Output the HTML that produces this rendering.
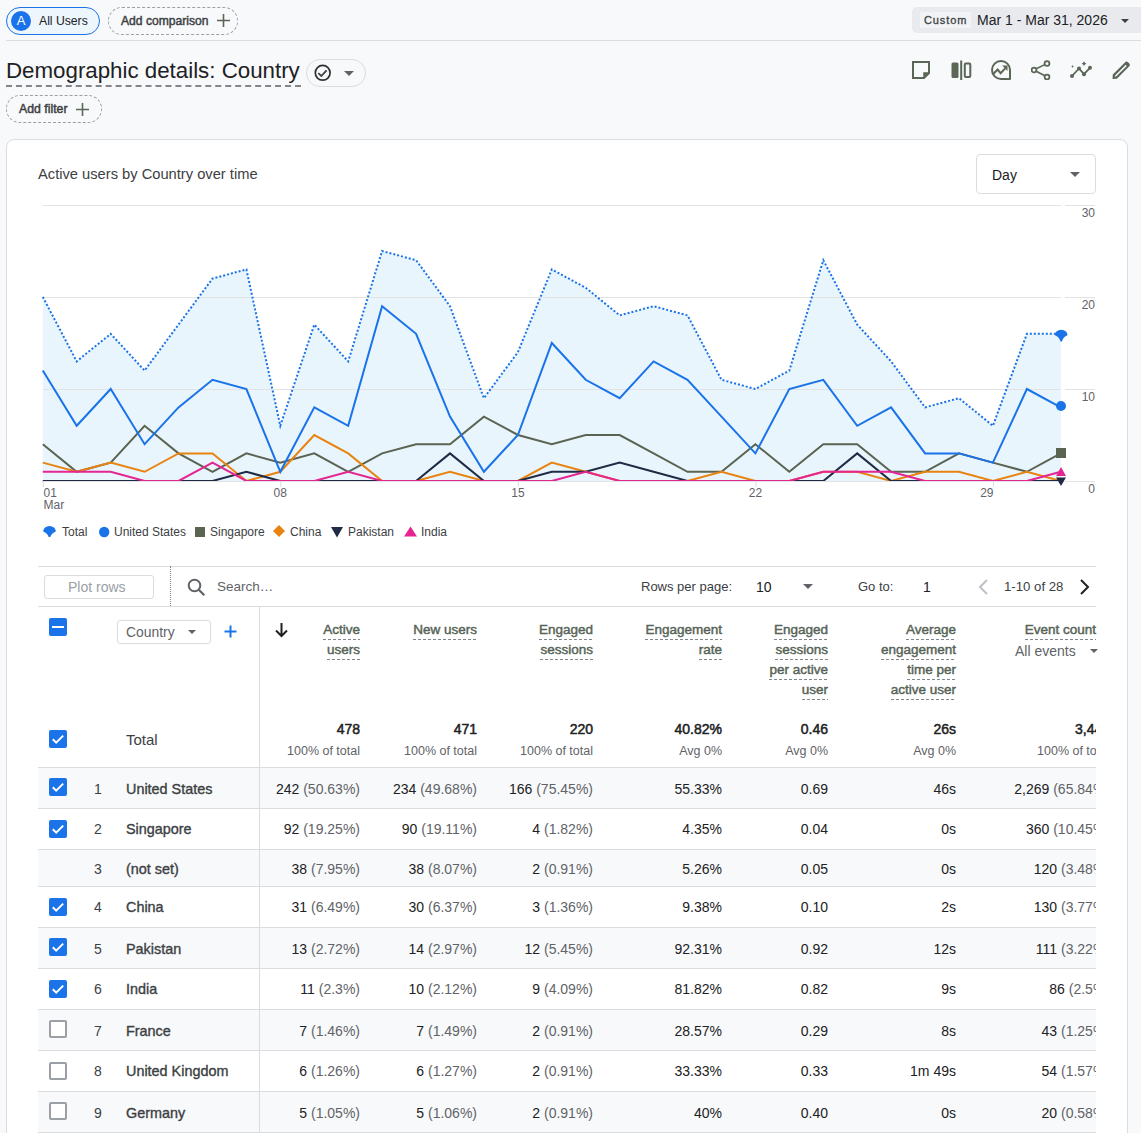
<!DOCTYPE html><html><head><meta charset="utf-8"><style>
*{box-sizing:border-box;margin:0;padding:0}
html,body{width:1141px;height:1133px;overflow:hidden;background:#f8f9fa;font-family:"Liberation Sans",sans-serif;color:#202124}
.a{position:absolute;white-space:nowrap}
.chip{position:absolute;border-radius:14px;height:28px}
.card{position:absolute;left:6px;top:139px;width:1122px;height:1100px;background:#fff;border:1px solid #dadce0;border-radius:8px}
.hl{position:absolute;height:1px;background:#dadce0}
.vl{position:absolute;width:1px;background:#dadce0}
.cb{position:absolute;width:18px;height:18px;border-radius:2px;background:#1a73e8}
.cbo{position:absolute;width:18px;height:18px;border-radius:2px;border:2px solid #9aa0a6;background:#fff}
.hd{position:absolute;text-align:right;font-size:13.5px;color:#566356;line-height:20px;-webkit-text-stroke:0.45px #566356}
.hd span{padding-bottom:3px;background:linear-gradient(to right,#80868b 3px,transparent 3px) repeat-x left bottom/5px 1px}
.num{position:absolute;text-align:right;font-size:14px;color:#202124}
.num i{font-style:normal;color:#5f6368}
</style></head><body>
<div class="hl" style="left:6px;top:40px;width:1135px;background:#dadce0"></div>
<div class="chip" style="left:6px;top:7px;width:94px;border:1.5px solid #1a73e8;background:#edf5fd"></div>
<div class="a" style="left:11px;top:11px;width:20px;height:20px;border-radius:50%;background:#1a73e8;color:#fff;font-size:13px;line-height:20px;text-align:center">A</div>
<div class="a" style="left:39px;top:13px;font-size:12.2px;line-height:16px;color:#202124">All Users</div>
<div class="chip" style="left:108px;top:7px;width:130px;border:1px dashed #9aa0a6"></div>
<div class="a" style="left:121px;top:12.5px;font-size:12.1px;line-height:16px;color:#3c4043;-webkit-text-stroke:0.45px #3c4043">Add comparison</div>
<svg class="a" style="left:216px;top:13px" width="15" height="15" viewBox="0 0 15 15"><path d="M7.5 1v13M1 7.5h13" stroke="#5a6657" stroke-width="1.6"/></svg>
<div class="a" style="left:912px;top:7px;width:240px;height:26px;border-radius:5px;background:#e8eaed"></div>
<div class="a" style="left:920px;top:12px;width:51px;height:16px;background:#f1f3f4"></div>
<div class="a" style="left:924px;top:12px;font-size:11px;line-height:16px;letter-spacing:0.9px;color:#3c4043;-webkit-text-stroke:0.3px #3c4043">Custom</div>
<div class="a" style="left:977px;top:11px;font-size:14px;line-height:18px;color:#202124">Mar 1 - Mar 31, 2026</div>
<div class="a" style="left:1121px;top:18.5px;width:0;height:0;border-left:4px solid transparent;border-right:4px solid transparent;border-top:4px solid #3c4043"></div>
<div class="a" style="left:6px;top:57px;font-size:22.3px;line-height:28px;color:#202124">Demographic details: Country</div>
<div class="a" style="left:6px;top:85px;width:295px;height:0;border-top:2px dashed #80868b"></div>
<div class="chip" style="left:306px;top:59px;width:60px;height:28px;border:1px solid #dadce0"></div>
<svg class="a" style="left:314px;top:64px" width="18" height="18" viewBox="0 0 18 18"><circle cx="8.7" cy="8.8" r="7.4" fill="none" stroke="#2d3230" stroke-width="1.7"/><path d="M4.3 9.2L7.3 12L12.6 6.3" fill="none" stroke="#3a443a" stroke-width="1.8"/></svg>
<div class="a" style="left:344px;top:71px;width:0;height:0;border-left:5px solid transparent;border-right:5px solid transparent;border-top:5px solid #5f6368"></div>
<svg class="a" style="left:911px;top:60px" width="23" height="20" viewBox="0 0 23 20"><path d="M2 2h16v11l-5 5H2z" fill="none" stroke="#5a6657" stroke-width="2"/><path d="M13 18v-5h5" fill="#5a6657" stroke="#5a6657" stroke-width="1.5"/></svg>
<svg class="a" style="left:951px;top:60px" width="23" height="20" viewBox="0 0 23 20"><rect x="0.5" y="2.5" width="7" height="15.5" rx="1.5" fill="#5a6657"/><rect x="9.2" y="0.5" width="2" height="19.5" fill="#5a6657"/><rect x="13.8" y="3.5" width="5.5" height="13.5" rx="1" fill="none" stroke="#5a6657" stroke-width="2"/></svg>
<svg class="a" style="left:991px;top:60px" width="23" height="20" viewBox="0 0 23 20"><path d="M19 10V19H10A9 9 0 1 1 19 10Z" fill="none" stroke="#5a6657" stroke-width="2" stroke-linejoin="round"/><path d="M2.5 13.8L6.6 9.6L9.6 13.2L14.2 8.4" fill="none" stroke="#5a6657" stroke-width="2"/><path d="M11.2 5.6H16.5V10.9Z" fill="#5a6657"/></svg>
<svg class="a" style="left:1031px;top:60px" width="23" height="20" viewBox="0 0 23 20"><circle cx="16" cy="3.5" r="2.4" fill="none" stroke="#5a6657" stroke-width="1.8"/><circle cx="3" cy="10" r="2.4" fill="none" stroke="#5a6657" stroke-width="1.8"/><circle cx="16" cy="17" r="2.4" fill="none" stroke="#5a6657" stroke-width="1.8"/><path d="M5.2 8.8l8.6-4.2M5.2 11.2l8.6 4.6" stroke="#5a6657" stroke-width="1.6"/></svg>
<svg class="a" style="left:1070px;top:60px" width="23" height="20" viewBox="0 0 23 20"><path d="M2 16L9 8.5L14 14.2L20 7.8" fill="none" stroke="#5a6657" stroke-width="1.8"/><circle cx="2" cy="16" r="2" fill="#5a6657"/><circle cx="9" cy="8.5" r="2" fill="#5a6657"/><circle cx="14" cy="14.2" r="2" fill="#5a6657"/><circle cx="20" cy="7.8" r="2" fill="#5a6657"/><path d="M2.5 4.9L3 6L4 6.4L3 6.8L2.5 7.9L2 6.8L1 6.4L2 6Z" fill="#5a6657"/><path d="M14 1.3L14.9 2.8L16.4 3.7L14.9 4.6L14 6.1L13.1 4.6L11.6 3.7L13.1 2.8Z" fill="#5a6657"/></svg>
<svg class="a" style="left:1111px;top:60px" width="23" height="20" viewBox="0 0 23 20"><path fill-rule="evenodd" d="M1.5 19L1.8 14.6L14.2 2.2Q15.6 0.8 17 2.2L18.3 3.5Q19.7 4.9 18.3 6.3L5.9 18.7Z M3.9 16.6L4.1 15.4L14.7 4.8L15.8 5.9L5.1 16.5Z" fill="#5a6657"/></svg>
<div class="chip" style="left:6px;top:95px;width:96px;height:28px;border:1px dashed #9aa0a6"></div>
<div class="a" style="left:19px;top:100.5px;font-size:12.3px;line-height:16px;color:#3c4043;-webkit-text-stroke:0.45px #3c4043">Add filter</div>
<svg class="a" style="left:75px;top:102px" width="15" height="15" viewBox="0 0 15 15"><path d="M7.5 1v13M1 7.5h13" stroke="#5a6657" stroke-width="1.6"/></svg>
<div class="card"></div>
<div class="a" style="left:38px;top:165px;font-size:14.7px;line-height:18px;color:#3c4043">Active users by Country over time</div>
<div class="a" style="left:976px;top:154px;width:120px;height:40px;border:1px solid #dadce0;border-radius:4px"></div>
<div class="a" style="left:992px;top:166px;font-size:14px;line-height:18px;color:#202124">Day</div>
<div class="a" style="left:1070px;top:172px;width:0;height:0;border-left:5px solid transparent;border-right:5px solid transparent;border-top:5px solid #5f6368"></div>
<svg class="a" style="left:0;top:0" width="1141" height="560" viewBox="0 0 1141 560"><polygon points="42.8,481 42.8,297.0 76.7,361.4 110.7,333.8 144.6,370.6 178.5,324.6 212.5,278.6 246.4,269.4 280.3,425.8 314.3,324.6 348.2,361.4 382.1,251.0 416.1,260.2 450.0,306.2 483.9,398.2 517.9,352.2 551.8,269.4 585.7,287.8 619.7,315.4 653.6,306.2 687.5,315.4 721.5,379.8 755.4,389.0 789.3,370.6 823.3,260.2 857.2,324.6 891.1,361.4 925.1,407.4 959.0,398.2 992.9,425.8 1026.9,333.8 1060.8,333.8 1060.8,481" fill="#e8f5fd"/>
<line x1="43" y1="205.5" x2="1061" y2="205.5" stroke="#e3e3e3" stroke-width="1"/>
<line x1="43" y1="297.5" x2="1061" y2="297.5" stroke="#e3e3e3" stroke-width="1"/>
<line x1="43" y1="389.5" x2="1061" y2="389.5" stroke="#e3e3e3" stroke-width="1"/>
<polyline points="42.8,444.2 76.7,471.8 110.7,462.6 144.6,425.8 178.5,453.4 212.5,471.8 246.4,453.4 280.3,462.6 314.3,453.4 348.2,471.8 382.1,453.4 416.1,444.2 450.0,444.2 483.9,416.6 517.9,435.0 551.8,444.2 585.7,435.0 619.7,435.0 653.6,453.4 687.5,471.8 721.5,471.8 755.4,444.2 789.3,471.8 823.3,444.2 857.2,444.2 891.1,471.8 925.1,471.8 959.0,453.4 992.9,462.6 1026.9,471.8 1060.8,453.4" fill="none" stroke="#5b6351" stroke-width="2" stroke-linejoin="miter"/>
<polyline points="42.8,462.6 76.7,471.8 110.7,462.6 144.6,471.8 178.5,453.4 212.5,453.4 246.4,481.0 280.3,471.8 314.3,435.0 348.2,453.4 382.1,481.0 416.1,481.0 450.0,471.8 483.9,481.0 517.9,481.0 551.8,462.6 585.7,471.8 619.7,481.0 653.6,481.0 687.5,481.0 721.5,471.8 755.4,481.0 789.3,481.0 823.3,471.8 857.2,471.8 891.1,481.0 925.1,471.8 959.0,471.8 992.9,481.0 1026.9,471.8 1060.8,481.0" fill="none" stroke="#e98310" stroke-width="2"/>
<polyline points="42.8,481.0 76.7,481.0 110.7,481.0 144.6,481.0 178.5,481.0 212.5,481.0 246.4,471.8 280.3,481.0 314.3,481.0 348.2,481.0 382.1,481.0 416.1,481.0 450.0,453.4 483.9,481.0 517.9,481.0 551.8,471.8 585.7,471.8 619.7,462.6 653.6,471.8 687.5,481.0 721.5,481.0 755.4,481.0 789.3,481.0 823.3,481.0 857.2,453.4 891.1,481.0 925.1,481.0 959.0,481.0 992.9,481.0 1026.9,481.0 1060.8,481.0" fill="none" stroke="#1f2a44" stroke-width="2"/>
<polyline points="42.8,471.8 76.7,471.8 110.7,471.8 144.6,481.0 178.5,481.0 212.5,462.6 246.4,481.0 280.3,481.0 314.3,481.0 348.2,471.8 382.1,481.0 416.1,481.0 450.0,481.0 483.9,481.0 517.9,481.0 551.8,481.0 585.7,471.8 619.7,481.0 653.6,481.0 687.5,481.0 721.5,481.0 755.4,481.0 789.3,481.0 823.3,471.8 857.2,471.8 891.1,471.8 925.1,481.0 959.0,481.0 992.9,481.0 1026.9,481.0 1060.8,471.8" fill="none" stroke="#e52592" stroke-width="2"/>
<polyline points="42.8,370.6 76.7,425.8 110.7,389.0 144.6,444.2 178.5,407.4 212.5,379.8 246.4,389.0 280.3,471.8 314.3,407.4 348.2,425.8 382.1,306.2 416.1,333.8 450.0,416.6 483.9,471.8 517.9,435.0 551.8,343.0 585.7,379.8 619.7,398.2 653.6,361.4 687.5,379.8 721.5,416.6 755.4,453.4 789.3,389.0 823.3,379.8 857.2,425.8 891.1,407.4 925.1,453.4 959.0,453.4 992.9,462.6 1026.9,389.0 1060.8,407.4" fill="none" stroke="#1a73e8" stroke-width="2"/>
<polyline points="42.8,297.0 76.7,361.4 110.7,333.8 144.6,370.6 178.5,324.6 212.5,278.6 246.4,269.4 280.3,425.8 314.3,324.6 348.2,361.4 382.1,251.0 416.1,260.2 450.0,306.2 483.9,398.2 517.9,352.2 551.8,269.4 585.7,287.8 619.7,315.4 653.6,306.2 687.5,315.4 721.5,379.8 755.4,389.0 789.3,370.6 823.3,260.2 857.2,324.6 891.1,361.4 925.1,407.4 959.0,398.2 992.9,425.8 1026.9,333.8 1060.8,333.8" fill="none" stroke="#1a73e8" stroke-width="2" stroke-dasharray="2 2"/><line x1="43" y1="481.5" x2="1061" y2="481.5" stroke="#e3e3e3"/><line x1="1065" y1="205.5" x2="1095" y2="205.5" stroke="#e3e3e3"/><line x1="1065" y1="297.5" x2="1095" y2="297.5" stroke="#e3e3e3"/><line x1="1065" y1="389.5" x2="1095" y2="389.5" stroke="#e3e3e3"/><line x1="1065" y1="481.5" x2="1095" y2="481.5" stroke="#e3e3e3"/><line x1="43.3" y1="482" x2="43.3" y2="487" stroke="#dadce0"/><line x1="280.8" y1="482" x2="280.8" y2="487" stroke="#dadce0"/><line x1="518.4" y1="482" x2="518.4" y2="487" stroke="#dadce0"/><line x1="755.9" y1="482" x2="755.9" y2="487" stroke="#dadce0"/><line x1="993.4" y1="482" x2="993.4" y2="487" stroke="#dadce0"/><path d="M1054.9 335.3 A6.3 5.6 0 0 1 1067.5 335.3 Q1063.2 336.8 1062 341.5 L1060.4 341.5 Q1059.2 336.8 1054.9 335.3Z" fill="#1a73e8"/><circle cx="1061" cy="406" r="5" fill="#1a73e8"/><rect x="1056" y="448" width="10" height="10" fill="#5b6351"/><path d="M1061 467 L1066 476 L1056 476Z" fill="#e52592"/><path d="M1056 477.5 L1066 477.5 L1061 486Z" fill="#1f2a44"/><g font-family="Liberation Sans" font-size="12" fill="#5f6368"><text x="1095" y="216.8" text-anchor="end">30</text><text x="1095" y="308.8" text-anchor="end">20</text><text x="1095" y="400.8" text-anchor="end">10</text><text x="1095" y="493" text-anchor="end">0</text><text x="43.5" y="497">01</text><text x="43.5" y="509">Mar</text><text x="280.3" y="497" text-anchor="middle">08</text><text x="517.9" y="497" text-anchor="middle">15</text><text x="755.4" y="497" text-anchor="middle">22</text><text x="993.5" y="497" text-anchor="end">29</text></g></svg>
<svg class="a" style="left:43px;top:525px" width="14" height="13" viewBox="0 0 14 13"><path d="M0.2 6.5 A6.3 5.5 0 0 1 12.8 6.5 Q8.5 8 7.3 12 L5.7 12 Q4.5 8 0.2 6.5Z" fill="#1a73e8"/></svg>
<div class="a" style="left:62px;top:525px;font-size:12px;line-height:15px;color:#3c4043">Total</div>
<svg class="a" style="left:99px;top:525px" width="14" height="13" viewBox="0 0 14 13"><circle cx="5.2" cy="7" r="5.2" fill="#1a73e8"/></svg>
<div class="a" style="left:114px;top:525px;font-size:12px;line-height:15px;color:#3c4043">United States</div>
<svg class="a" style="left:195px;top:525px" width="14" height="13" viewBox="0 0 14 13"><rect x="0" y="2" width="10" height="10" fill="#5b6351"/></svg>
<div class="a" style="left:210px;top:525px;font-size:12px;line-height:15px;color:#3c4043">Singapore</div>
<svg class="a" style="left:273px;top:525px" width="14" height="13" viewBox="0 0 14 13"><path d="M6 0 L12 6 L6 12 L0 6Z" fill="#e98310"/></svg>
<div class="a" style="left:290px;top:525px;font-size:12px;line-height:15px;color:#3c4043">China</div>
<svg class="a" style="left:331px;top:525px" width="14" height="13" viewBox="0 0 14 13"><path d="M0 2 L12 2 L6 12.5Z" fill="#1f2a44"/></svg>
<div class="a" style="left:348px;top:525px;font-size:12px;line-height:15px;color:#3c4043">Pakistan</div>
<svg class="a" style="left:404px;top:525px" width="14" height="13" viewBox="0 0 14 13"><path d="M6.5 1.5 L13 11.5 L0 11.5Z" fill="#e52592"/></svg>
<div class="a" style="left:421px;top:525px;font-size:12px;line-height:15px;color:#3c4043">India</div>
<div class="hl" style="left:38px;top:566px;width:1058px"></div>
<div class="hl" style="left:38px;top:606px;width:1058px"></div>
<div class="a" style="left:44px;top:575px;width:110px;height:24px;border:1px solid #dadce0;border-radius:3px"></div>
<div class="a" style="left:68px;top:579px;font-size:14px;line-height:16px;color:#9aa0a6">Plot rows</div>
<div class="a" style="left:170px;top:566px;width:0;height:40px;border-left:1px dotted #80868b"></div>
<svg class="a" style="left:187px;top:578px" width="19" height="19" viewBox="0 0 19 19"><circle cx="7.5" cy="7.5" r="5.8" fill="none" stroke="#5f6368" stroke-width="2"/><path d="M11.8 11.8l5.5 5.5" stroke="#5f6368" stroke-width="2.2"/></svg>
<div class="a" style="left:217px;top:579px;font-size:13.5px;line-height:16px;color:#5f6368">Search…</div>
<div class="a" style="left:641px;top:579px;font-size:13px;line-height:16px;color:#3c4043">Rows per page:</div>
<div class="a" style="left:756px;top:579px;font-size:14px;line-height:16px;color:#202124">10</div>
<div class="a" style="left:803px;top:584px;width:0;height:0;border-left:5.5px solid transparent;border-right:5.5px solid transparent;border-top:5.5px solid #5f6368"></div>
<div class="a" style="left:858px;top:579px;font-size:13px;line-height:16px;color:#3c4043">Go to:</div>
<div class="a" style="left:923px;top:579px;font-size:14px;line-height:16px;color:#202124">1</div>
<svg class="a" style="left:976px;top:578px" width="16" height="18" viewBox="0 0 16 18"><path d="M11 2L4 9l7 7" fill="none" stroke="#bdc1c6" stroke-width="2"/></svg>
<div class="a" style="left:1004px;top:579px;font-size:13.2px;line-height:16px;color:#3c4043">1-10 of 28</div>
<svg class="a" style="left:1077px;top:578px" width="16" height="18" viewBox="0 0 16 18"><path d="M4 2l7 7-7 7" fill="none" stroke="#202124" stroke-width="2"/></svg>
<div class="vl" style="left:259px;top:606px;height:527px"></div>
<div class="cb" style="left:49px;top:618px"><div style="position:absolute;left:3px;top:8px;width:12px;height:2px;background:#fff"></div></div>
<div class="a" style="left:117px;top:620px;width:94px;height:24px;border:1px solid #dadce0;border-radius:3px;background:#fff"></div>
<div class="a" style="left:126px;top:624px;font-size:13.9px;line-height:16px;color:#5f6368">Country</div>
<div class="a" style="left:188px;top:630px;width:0;height:0;border-left:4.5px solid transparent;border-right:4.5px solid transparent;border-top:4.5px solid #5f6368"></div>
<svg class="a" style="left:223px;top:624px" width="15" height="15" viewBox="0 0 15 15"><path d="M7.5 1.5v12M1.5 7.5h12" stroke="#1a73e8" stroke-width="2"/></svg>
<svg class="a" style="left:274px;top:622px" width="15" height="16" viewBox="0 0 15 16"><path d="M7.5 1v13M2 8.5l5.5 5.5 5.5-5.5" fill="none" stroke="#202124" stroke-width="2"/></svg>
<div class="hd" style="right:781px;top:620px"><span>Active</span><br><span>users</span></div>
<div class="hd" style="right:664px;top:620px"><span>New users</span></div>
<div class="hd" style="right:548px;top:620px"><span>Engaged</span><br><span>sessions</span></div>
<div class="hd" style="right:419px;top:620px"><span>Engagement</span><br><span>rate</span></div>
<div class="hd" style="right:313px;top:620px"><span>Engaged</span><br><span>sessions</span><br><span>per active</span><br><span>user</span></div>
<div class="hd" style="right:185px;top:620px"><span>Average</span><br><span>engagement</span><br><span>time per</span><br><span>active user</span></div>
<div class="hd" style="right:45px;top:620px"><span>Event count</span></div>
<div class="a" style="left:1015px;top:643px;font-size:14px;line-height:16px;color:#5f6368">All events</div>
<div class="a" style="left:1090px;top:649px;width:0;height:0;border-left:4px solid transparent;border-right:4px solid transparent;border-top:4px solid #5f6368"></div>
<div class="a" style="left:0;top:0;width:1096px;height:1133px;overflow:hidden">
<div class="cb" style="left:49px;top:730px"></div>
<svg class="a" style="left:49px;top:730px" width="18" height="18" viewBox="0 0 18 18"><path d="M3.8 9.2l3.4 3.4 7-7" fill="none" stroke="#fff" stroke-width="2"/></svg>
<div class="a" style="left:126px;top:731px;font-size:15px;line-height:17px;color:#3c4043">Total</div>
<div class="num" style="right:736px;top:721px;line-height:16px;-webkit-text-stroke:0.5px #202124">478</div>
<div class="num" style="right:736px;top:744px;font-size:12.5px;line-height:15px;color:#5f6368">100% of total</div>
<div class="num" style="right:619px;top:721px;line-height:16px;-webkit-text-stroke:0.5px #202124">471</div>
<div class="num" style="right:619px;top:744px;font-size:12.5px;line-height:15px;color:#5f6368">100% of total</div>
<div class="num" style="right:503px;top:721px;line-height:16px;-webkit-text-stroke:0.5px #202124">220</div>
<div class="num" style="right:503px;top:744px;font-size:12.5px;line-height:15px;color:#5f6368">100% of total</div>
<div class="num" style="right:374px;top:721px;line-height:16px;-webkit-text-stroke:0.5px #202124">40.82%</div>
<div class="num" style="right:374px;top:744px;font-size:12.5px;line-height:15px;color:#5f6368">Avg 0%</div>
<div class="num" style="right:268px;top:721px;line-height:16px;-webkit-text-stroke:0.5px #202124">0.46</div>
<div class="num" style="right:268px;top:744px;font-size:12.5px;line-height:15px;color:#5f6368">Avg 0%</div>
<div class="num" style="right:140px;top:721px;line-height:16px;-webkit-text-stroke:0.5px #202124">26s</div>
<div class="num" style="right:140px;top:744px;font-size:12.5px;line-height:15px;color:#5f6368">Avg 0%</div>
<div class="num" style="right:-14px;top:721px;line-height:16px;-webkit-text-stroke:0.5px #202124">3,443</div>
<div class="num" style="right:-14px;top:744px;font-size:12.5px;line-height:15px;color:#5f6368">100% of total</div>
<div class="hl" style="left:38px;top:767px;width:1058px"></div>
<div class="a" style="left:38px;top:768px;width:1058px;height:40px;background:#f8f9fa"></div>
<div class="hl" style="left:38px;top:808px;width:1058px"></div>
<div class="cb" style="left:49px;top:778px"></div>
<svg class="a" style="left:49px;top:778px" width="18" height="18" viewBox="0 0 18 18"><path d="M3.8 9.2l3.4 3.4 7-7" fill="none" stroke="#fff" stroke-width="2"/></svg>
<div class="a" style="left:94px;top:781px;font-size:14px;line-height:16px;color:#3c4043">1</div>
<div class="a" style="left:126px;top:781px;font-size:14.4px;line-height:16px;color:#3c4043;-webkit-text-stroke:0.35px #3c4043">United States</div>
<div class="num" style="right:736px;top:781px;line-height:16px">242 <i>(50.63%)</i></div>
<div class="num" style="right:619px;top:781px;line-height:16px">234 <i>(49.68%)</i></div>
<div class="num" style="right:503px;top:781px;line-height:16px">166 <i>(75.45%)</i></div>
<div class="num" style="right:374px;top:781px;line-height:16px">55.33%</div>
<div class="num" style="right:268px;top:781px;line-height:16px">0.69</div>
<div class="num" style="right:140px;top:781px;line-height:16px">46s</div>
<div class="num" style="right:-14px;top:781px;line-height:16px">2,269 <i>(65.84%)</i></div>
<div class="a" style="left:38px;top:809px;width:1058px;height:40px;background:#fff"></div>
<div class="hl" style="left:38px;top:849px;width:1058px"></div>
<div class="cb" style="left:49px;top:820px"></div>
<svg class="a" style="left:49px;top:820px" width="18" height="18" viewBox="0 0 18 18"><path d="M3.8 9.2l3.4 3.4 7-7" fill="none" stroke="#fff" stroke-width="2"/></svg>
<div class="a" style="left:94px;top:821px;font-size:14px;line-height:16px;color:#3c4043">2</div>
<div class="a" style="left:126px;top:821px;font-size:14.4px;line-height:16px;color:#3c4043;-webkit-text-stroke:0.35px #3c4043">Singapore</div>
<div class="num" style="right:736px;top:821px;line-height:16px">92 <i>(19.25%)</i></div>
<div class="num" style="right:619px;top:821px;line-height:16px">90 <i>(19.11%)</i></div>
<div class="num" style="right:503px;top:821px;line-height:16px">4 <i>(1.82%)</i></div>
<div class="num" style="right:374px;top:821px;line-height:16px">4.35%</div>
<div class="num" style="right:268px;top:821px;line-height:16px">0.04</div>
<div class="num" style="right:140px;top:821px;line-height:16px">0s</div>
<div class="num" style="right:-14px;top:821px;line-height:16px">360 <i>(10.45%)</i></div>
<div class="a" style="left:38px;top:850px;width:1058px;height:36px;background:#f8f9fa"></div>
<div class="hl" style="left:38px;top:886px;width:1058px"></div>
<div class="a" style="left:94px;top:861px;font-size:14px;line-height:16px;color:#3c4043">3</div>
<div class="a" style="left:126px;top:861px;font-size:14.4px;line-height:16px;color:#3c4043;-webkit-text-stroke:0.35px #3c4043">(not set)</div>
<div class="num" style="right:736px;top:861px;line-height:16px">38 <i>(7.95%)</i></div>
<div class="num" style="right:619px;top:861px;line-height:16px">38 <i>(8.07%)</i></div>
<div class="num" style="right:503px;top:861px;line-height:16px">2 <i>(0.91%)</i></div>
<div class="num" style="right:374px;top:861px;line-height:16px">5.26%</div>
<div class="num" style="right:268px;top:861px;line-height:16px">0.05</div>
<div class="num" style="right:140px;top:861px;line-height:16px">0s</div>
<div class="num" style="right:-14px;top:861px;line-height:16px">120 <i>(3.48%)</i></div>
<div class="a" style="left:38px;top:887px;width:1058px;height:40px;background:#fff"></div>
<div class="hl" style="left:38px;top:927px;width:1058px"></div>
<div class="cb" style="left:49px;top:898px"></div>
<svg class="a" style="left:49px;top:898px" width="18" height="18" viewBox="0 0 18 18"><path d="M3.8 9.2l3.4 3.4 7-7" fill="none" stroke="#fff" stroke-width="2"/></svg>
<div class="a" style="left:94px;top:899px;font-size:14px;line-height:16px;color:#3c4043">4</div>
<div class="a" style="left:126px;top:899px;font-size:14.4px;line-height:16px;color:#3c4043;-webkit-text-stroke:0.35px #3c4043">China</div>
<div class="num" style="right:736px;top:899px;line-height:16px">31 <i>(6.49%)</i></div>
<div class="num" style="right:619px;top:899px;line-height:16px">30 <i>(6.37%)</i></div>
<div class="num" style="right:503px;top:899px;line-height:16px">3 <i>(1.36%)</i></div>
<div class="num" style="right:374px;top:899px;line-height:16px">9.38%</div>
<div class="num" style="right:268px;top:899px;line-height:16px">0.10</div>
<div class="num" style="right:140px;top:899px;line-height:16px">2s</div>
<div class="num" style="right:-14px;top:899px;line-height:16px">130 <i>(3.77%)</i></div>
<div class="a" style="left:38px;top:928px;width:1058px;height:40px;background:#f8f9fa"></div>
<div class="hl" style="left:38px;top:968px;width:1058px"></div>
<div class="cb" style="left:49px;top:938px"></div>
<svg class="a" style="left:49px;top:938px" width="18" height="18" viewBox="0 0 18 18"><path d="M3.8 9.2l3.4 3.4 7-7" fill="none" stroke="#fff" stroke-width="2"/></svg>
<div class="a" style="left:94px;top:941px;font-size:14px;line-height:16px;color:#3c4043">5</div>
<div class="a" style="left:126px;top:941px;font-size:14.4px;line-height:16px;color:#3c4043;-webkit-text-stroke:0.35px #3c4043">Pakistan</div>
<div class="num" style="right:736px;top:941px;line-height:16px">13 <i>(2.72%)</i></div>
<div class="num" style="right:619px;top:941px;line-height:16px">14 <i>(2.97%)</i></div>
<div class="num" style="right:503px;top:941px;line-height:16px">12 <i>(5.45%)</i></div>
<div class="num" style="right:374px;top:941px;line-height:16px">92.31%</div>
<div class="num" style="right:268px;top:941px;line-height:16px">0.92</div>
<div class="num" style="right:140px;top:941px;line-height:16px">12s</div>
<div class="num" style="right:-14px;top:941px;line-height:16px">111 <i>(3.22%)</i></div>
<div class="a" style="left:38px;top:969px;width:1058px;height:40px;background:#fff"></div>
<div class="hl" style="left:38px;top:1009px;width:1058px"></div>
<div class="cb" style="left:49px;top:980px"></div>
<svg class="a" style="left:49px;top:980px" width="18" height="18" viewBox="0 0 18 18"><path d="M3.8 9.2l3.4 3.4 7-7" fill="none" stroke="#fff" stroke-width="2"/></svg>
<div class="a" style="left:94px;top:981px;font-size:14px;line-height:16px;color:#3c4043">6</div>
<div class="a" style="left:126px;top:981px;font-size:14.4px;line-height:16px;color:#3c4043;-webkit-text-stroke:0.35px #3c4043">India</div>
<div class="num" style="right:736px;top:981px;line-height:16px">11 <i>(2.3%)</i></div>
<div class="num" style="right:619px;top:981px;line-height:16px">10 <i>(2.12%)</i></div>
<div class="num" style="right:503px;top:981px;line-height:16px">9 <i>(4.09%)</i></div>
<div class="num" style="right:374px;top:981px;line-height:16px">81.82%</div>
<div class="num" style="right:268px;top:981px;line-height:16px">0.82</div>
<div class="num" style="right:140px;top:981px;line-height:16px">9s</div>
<div class="num" style="right:-14px;top:981px;line-height:16px">86 <i>(2.5%)</i></div>
<div class="a" style="left:38px;top:1010px;width:1058px;height:40px;background:#f8f9fa"></div>
<div class="hl" style="left:38px;top:1050px;width:1058px"></div>
<div class="cbo" style="left:49px;top:1020px"></div>
<div class="a" style="left:94px;top:1023px;font-size:14px;line-height:16px;color:#3c4043">7</div>
<div class="a" style="left:126px;top:1023px;font-size:14.4px;line-height:16px;color:#3c4043;-webkit-text-stroke:0.35px #3c4043">France</div>
<div class="num" style="right:736px;top:1023px;line-height:16px">7 <i>(1.46%)</i></div>
<div class="num" style="right:619px;top:1023px;line-height:16px">7 <i>(1.49%)</i></div>
<div class="num" style="right:503px;top:1023px;line-height:16px">2 <i>(0.91%)</i></div>
<div class="num" style="right:374px;top:1023px;line-height:16px">28.57%</div>
<div class="num" style="right:268px;top:1023px;line-height:16px">0.29</div>
<div class="num" style="right:140px;top:1023px;line-height:16px">8s</div>
<div class="num" style="right:-14px;top:1023px;line-height:16px">43 <i>(1.25%)</i></div>
<div class="a" style="left:38px;top:1051px;width:1058px;height:40px;background:#fff"></div>
<div class="hl" style="left:38px;top:1091px;width:1058px"></div>
<div class="cbo" style="left:49px;top:1062px"></div>
<div class="a" style="left:94px;top:1063px;font-size:14px;line-height:16px;color:#3c4043">8</div>
<div class="a" style="left:126px;top:1063px;font-size:14.4px;line-height:16px;color:#3c4043;-webkit-text-stroke:0.35px #3c4043">United Kingdom</div>
<div class="num" style="right:736px;top:1063px;line-height:16px">6 <i>(1.26%)</i></div>
<div class="num" style="right:619px;top:1063px;line-height:16px">6 <i>(1.27%)</i></div>
<div class="num" style="right:503px;top:1063px;line-height:16px">2 <i>(0.91%)</i></div>
<div class="num" style="right:374px;top:1063px;line-height:16px">33.33%</div>
<div class="num" style="right:268px;top:1063px;line-height:16px">0.33</div>
<div class="num" style="right:140px;top:1063px;line-height:16px">1m 49s</div>
<div class="num" style="right:-14px;top:1063px;line-height:16px">54 <i>(1.57%)</i></div>
<div class="a" style="left:38px;top:1092px;width:1058px;height:40px;background:#f8f9fa"></div>
<div class="hl" style="left:38px;top:1132px;width:1058px"></div>
<div class="cbo" style="left:49px;top:1102px"></div>
<div class="a" style="left:94px;top:1105px;font-size:14px;line-height:16px;color:#3c4043">9</div>
<div class="a" style="left:126px;top:1105px;font-size:14.4px;line-height:16px;color:#3c4043;-webkit-text-stroke:0.35px #3c4043">Germany</div>
<div class="num" style="right:736px;top:1105px;line-height:16px">5 <i>(1.05%)</i></div>
<div class="num" style="right:619px;top:1105px;line-height:16px">5 <i>(1.06%)</i></div>
<div class="num" style="right:503px;top:1105px;line-height:16px">2 <i>(0.91%)</i></div>
<div class="num" style="right:374px;top:1105px;line-height:16px">40%</div>
<div class="num" style="right:268px;top:1105px;line-height:16px">0.40</div>
<div class="num" style="right:140px;top:1105px;line-height:16px">0s</div>
<div class="num" style="right:-14px;top:1105px;line-height:16px">20 <i>(0.58%)</i></div>
</div>
<div class="vl" style="left:259px;top:606px;height:527px"></div>
</body></html>
